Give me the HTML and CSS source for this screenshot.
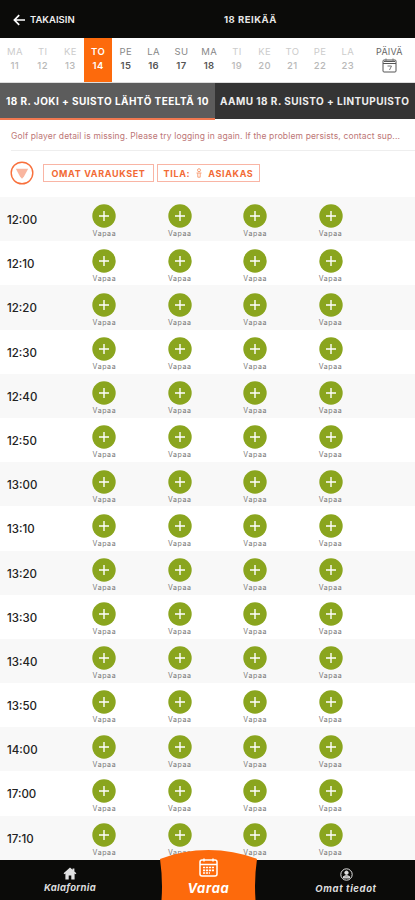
FILE: index.html
```html
<!DOCTYPE html>
<html lang="fi">
<head>
    <meta charset="UTF-8">
    <meta name="viewport" content="width=device-width, initial-scale=1.0">
    <title>18 reikää</title>
    <link rel="stylesheet" href="styles.css">
</head>
<body>
    <header class="topbar">
        <a class="back" href="#">
            <svg width="13" height="12" viewBox="0 0 13 12"><path d="M12 6H1.8M6.2 1.2L1.4 6l4.8 4.8" fill="none" stroke="#fff" stroke-width="1.7"/></svg>
            <span>TAKAISIN</span>
        </a>
        <h1>18 REIKÄÄ</h1>
    </header>

    <nav class="days">
        <div class="day past"><span>MA</span><b>11</b></div>
        <div class="day past"><span>TI</span><b>12</b></div>
        <div class="day past"><span>KE</span><b>13</b></div>
        <div class="day active"><span>TO</span><b>14</b></div>
        <div class="day"><span>PE</span><b>15</b></div>
        <div class="day"><span>LA</span><b>16</b></div>
        <div class="day"><span>SU</span><b>17</b></div>
        <div class="day"><span>MA</span><b>18</b></div>
        <div class="day later"><span>TI</span><b>19</b></div>
        <div class="day later"><span>KE</span><b>20</b></div>
        <div class="day later"><span>TO</span><b>21</b></div>
        <div class="day later"><span>PE</span><b>22</b></div>
        <div class="day later"><span>LA</span><b>23</b></div>
        <div class="pick">
            <span>PÄIVÄ</span>
            <svg width="15" height="15" viewBox="0 0 15 15" fill="none" stroke="#555">
                <rect x="1" y="2" width="13" height="12" rx="1"/>
                <path d="M1 5.5h13M2 3.5h11"/>
                <path d="M4 .5v3M11 .5v3M5.5 8h4l-2 4" stroke="#777"/>
            </svg>
        </div>
    </nav>

    <div class="courses">
        <div class="course selected"><span>18 R. JOKI + SUISTO LÄHTÖ TEELTÄ 10</span></div>
        <div class="course"><span>AAMU 18 R. SUISTO + LINTUPUISTO</span></div>
    </div>

    <p class="error">Golf player detail is missing. Please try logging in again. If the problem persists, contact sup...</p>

    <div class="filters">
        <svg width="24" height="24" viewBox="0 0 24 24">
            <circle cx="12" cy="12" r="10.8" fill="#fff" stroke="#f8703c" stroke-width="1.4"/>
            <path d="M5.8 7.8h12.4L14 15.6 12 17.8l-2-2.2z" fill="#f9b6a0"/>
        </svg>
        <div class="chip">OMAT VARAUKSET</div>
        <div class="chip state">
            <span>TILA:</span>
            <svg width="8" height="10" viewBox="0 0 8 10" fill="none" stroke="#f8a27c"><circle cx="4" cy="2.2" r="1.5"/><path d="M1.5 5h5M2.8 5v4.2h2.4V5"/></svg>
            <span>ASIAKAS</span>
        </div>
    </div>

    <main id="times" class="times"></main>

    <footer class="tabbar">
        <div class="tab">
            <svg width="14" height="13" viewBox="0 0 14 13"><path d="M7 .5L.6 6.3l.9 1L2.4 6.6V12.4H5.7V8.5h2.6v3.9h3.3V6.6l.9.7.9-1L11.4 4.4V1.5H9.6v1.3z" fill="#e2e2e2"/></svg>
            <span>Kalafornia</span>
        </div>
        <div class="tab book">
            <svg class="bump" width="97" height="50" viewBox="0 0 97 50"><path d="M1.5 50Q3 30 0 9Q23 0 48.5 0T97 9Q94 29 95.5 50z" fill="#fd6a0c"/></svg>
            <svg class="cal" width="19" height="19" viewBox="0 0 19 19" fill="none" stroke="#fff">
                <rect x="1" y="2" width="17" height="16" rx="2" stroke-width="1.5"/>
                <path d="M1 6.5h17M5 .5v3M14 .5v3" stroke-width="1.5"/>
                <path d="M4 9.5h11M4 12.3h11M4 15h7" stroke-width="1.7" stroke-dasharray="2.2 .8"/>
            </svg>
            <span>Varaa</span>
        </div>
        <div class="tab">
            <svg width="13" height="13" viewBox="0 0 13 13" fill="none" stroke="#e2e2e2"><circle cx="6.5" cy="6.5" r="5.7"/><circle cx="6.5" cy="4.7" r="1.7" fill="#e2e2e2"/><path d="M3.5 10V8.5Q6.5 6.5 9.5 8.5V10z" fill="#aaa"/></svg>
            <span>Omat tiedot</span>
        </div>
    </footer>

    <script src="script.js"></script>
</body>
</html>
```
FILE: styles.css
```css
* {
    margin: 0;
    padding: 0;
    box-sizing: border-box;
}

body {
    display: flex;
    flex-direction: column;
    width: 415px;
    height: 900px;
    overflow: hidden;
    background: #fff;
    color: #222;
    font-family: Inter, 'Liberation Sans', sans-serif;
    white-space: nowrap;
}

svg {
    display: block;
    flex: none;
}

.topbar {
    display: grid;
    grid-template-columns: 86px 1fr;
    align-items: center;
    flex: none;
    height: 38px;
    background: #0b0b09;
    color: #e6e6e6;
}

.back {
    display: flex;
    align-items: center;
    gap: 4px;
    padding: 1px 0 0 13px;
    color: #eee;
    font-size: 9.5px;
    font-weight: 600;
    text-decoration: none;
}

h1 {
    padding: 1px 0 0 138px;
    font-size: 9.5px;
    font-weight: 700;
    letter-spacing: 0.5px;
}

.days {
    display: flex;
    flex: none;
    height: 45px;
    padding-left: 1px;
    border-bottom: 1px solid #ddd;
}

.day {
    display: flex;
    flex: none;
    flex-direction: column;
    align-items: center;
    width: 27.75px;
    padding-top: 7px;
    font-size: 9.5px;
    line-height: 13.5px;
    letter-spacing: 0.4px;
    color: #555;
}

.day span {
    color: #888;
}

.day b {
    font-weight: 600;
}

.past, .later {
    color: #b9b9b9;
}

.past span, .later span {
    color: #ccc;
}

.past b, .later b {
    font-weight: 500;
}

.active, .active span {
    background: #fd6a0c;
    color: #fff;
    font-weight: 600;
}

.pick {
    display: flex;
    flex: 1;
    flex-direction: column;
    align-items: center;
    padding: 8px 0 0 2px;
    font-size: 9px;
    line-height: 12px;
    letter-spacing: 0.2px;
    color: #666;
}

.courses {
    display: flex;
    flex: none;
    height: 37px;
    color: #eee;
    font-size: 10px;
    font-weight: 700;
}

.course {
    flex: 1;
    height: 36px;
    padding-left: 5px;
    background: #343434;
    line-height: 36px;
    letter-spacing: 0.45px;
}

.selected {
    flex: none;
    width: 215px;
    height: 37px;
    padding-left: 6px;
    background: #5c5c5c;
    border-bottom: 2px solid #f07850;
    color: #fff;
}

.error {
    flex: none;
    height: 31px;
    margin-left: 11px;
    border-bottom: 1px solid #eee;
    color: #bd7676;
    font-size: 8.5px;
    line-height: 32px;
    letter-spacing: 0.14px;
}

.filters {
    display: flex;
    align-items: center;
    flex: none;
    height: 46px;
    padding: 0 0 2px 10px;
    color: #f26a35;
    font-size: 9px;
    font-weight: 700;
}

.chip {
    display: flex;
    align-items: center;
    justify-content: center;
    height: 18px;
    margin-left: 9px;
    border: 1px solid #f9b5a5;
    width: 111px;
    letter-spacing: 0.65px;
}

.state {
    gap: 5px;
    width: 103px;
    margin-left: 3px;
}

.times {
    flex: 1;
    min-height: 0;
    overflow: hidden;
}

.row {
    display: grid;
    grid-template-columns: 66.7px repeat(4, 75.4px);
    height: 44.2px;
}

.row:nth-child(odd) {
    background: #f8f8f8;
}

.time {
    padding-left: 7px;
    font-size: 11.5px;
    font-weight: 500;
    line-height: 46px;
}

.slot {
    display: flex;
    flex-direction: column;
    align-items: center;
    padding-top: 7.4px;
    color: #777;
    font-size: 7px;
    line-height: 11px;
    letter-spacing: 0.6px;
}

.tabbar {
    display: flex;
    flex: none;
    height: 40px;
    background: #0b0b09;
    color: #ddd;
    font-size: 9.5px;
    font-weight: 700;
    font-style: italic;
    letter-spacing: 0.3px;
}

.tab {
    display: flex;
    flex-direction: column;
    align-items: center;
    width: 160px;
    padding: 7px 20px 0 0;
    line-height: 15px;
}

.tab:last-child {
    width: 158px;
    padding: 8px 0 0 20px;
    line-height: 16px;
    letter-spacing: 0.6px;
}

/* orange tab rises above the bar */
.book {
    position: relative;
    width: 97px;
    padding: 0;
    color: #fff;
    font-size: 13px;
    letter-spacing: 0.7px;
}

.bump {
    position: absolute;
    left: 0;
    bottom: 0;
}

.cal {
    position: relative;
    margin-top: -2px;
}

.book span {
    position: relative;
    line-height: 22px;
}
```
FILE: script.js
```js
const times = ['12:00', '12:10', '12:20', '12:30', '12:40', '12:50', '13:00', '13:10',
    '13:20', '13:30', '13:40', '13:50', '14:00', '17:00', '17:10'];

const slot = `<div class="slot">
    <svg width="24" height="24" viewBox="0 0 24 24"><circle cx="12" cy="12" r="11.7" fill="#8aa51e"/><path d="M12 7v10M7 12h10" stroke="#fff" stroke-width="1.4"/></svg>
    <span>Vapaa</span>
</div>`;

document.getElementById('times').innerHTML = times.map(time =>
    `<div class="row"><div class="time">${time}</div>${slot.repeat(4)}</div>`
).join('');
```
